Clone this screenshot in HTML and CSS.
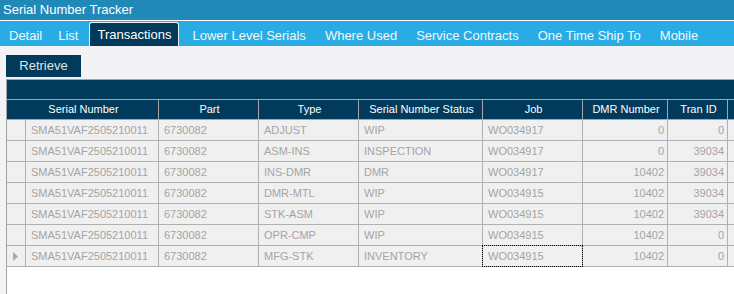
FILE: index.html
```html
<!DOCTYPE html>
<html lang="en">
<head>
    <meta charset="UTF-8">
    <meta name="viewport" content="width=device-width, initial-scale=1.0">
    <title>Serial Number Tracker</title>
    <link rel="stylesheet" href="styles.css">
</head>
<body>
<header class="title-bar">Serial Number Tracker</header>

<nav class="tabs">
    <a class="tab" href="#">Detail</a>
    <a class="tab" href="#">List</a>
    <a class="tab active" href="#">Transactions</a>
    <a class="tab" href="#">Lower Level Serials</a>
    <a class="tab" href="#">Where Used</a>
    <a class="tab" href="#">Service Contracts</a>
    <a class="tab" href="#">One Time Ship To</a>
    <a class="tab" href="#">Mobile</a>
</nav>

<main class="content">
    <button class="btn-retrieve" type="button">Retrieve</button>

    <div class="grid">
        <div class="grid-band"></div>
        <table class="grid-table">
            <colgroup>
                <col class="col-rowhead">
                <col class="col-serial">
                <col class="col-part">
                <col class="col-type">
                <col class="col-status">
                <col class="col-job">
                <col class="col-dmr">
                <col class="col-tran">
                <col class="col-extra">
            </colgroup>
            <thead>
                <tr>
                    <th colspan="2">Serial Number</th>
                    <th>Part</th>
                    <th>Type</th>
                    <th>Serial Number Status</th>
                    <th>Job</th>
                    <th>DMR Number</th>
                    <th>Tran ID</th>
                    <th></th>
                </tr>
            </thead>
            <tbody>
                <tr>
                    <td class="rowhead"></td>
                    <td>SMA51VAF2505210011</td><td>6730082</td><td>ADJUST</td><td>WIP</td>
                    <td>WO034917</td><td class="num">0</td><td class="num">0</td><td></td>
                </tr>
                <tr>
                    <td class="rowhead"></td>
                    <td>SMA51VAF2505210011</td><td>6730082</td><td>ASM-INS</td><td>INSPECTION</td>
                    <td>WO034917</td><td class="num">0</td><td class="num">39034</td><td></td>
                </tr>
                <tr>
                    <td class="rowhead"></td>
                    <td>SMA51VAF2505210011</td><td>6730082</td><td>INS-DMR</td><td>DMR</td>
                    <td>WO034917</td><td class="num">10402</td><td class="num">39034</td><td></td>
                </tr>
                <tr>
                    <td class="rowhead"></td>
                    <td>SMA51VAF2505210011</td><td>6730082</td><td>DMR-MTL</td><td>WIP</td>
                    <td>WO034915</td><td class="num">10402</td><td class="num">39034</td><td></td>
                </tr>
                <tr>
                    <td class="rowhead"></td>
                    <td>SMA51VAF2505210011</td><td>6730082</td><td>STK-ASM</td><td>WIP</td>
                    <td>WO034915</td><td class="num">10402</td><td class="num">39034</td><td></td>
                </tr>
                <tr>
                    <td class="rowhead"></td>
                    <td>SMA51VAF2505210011</td><td>6730082</td><td>OPR-CMP</td><td>WIP</td>
                    <td>WO034915</td><td class="num">10402</td><td class="num">0</td><td></td>
                </tr>
                <tr class="current">
                    <td class="rowhead">
                        <svg class="row-arrow" width="5" height="9" viewBox="0 0 5 9"><path d="M0 0 L5 4.5 L0 9 Z" fill="#a9a9a9"/></svg>
                    </td>
                    <td>SMA51VAF2505210011</td><td>6730082</td><td>MFG-STK</td><td>INVENTORY</td>
                    <td class="focused">WO034915</td><td class="num">10402</td><td class="num">0</td><td></td>
                </tr>
            </tbody>
        </table>
    </div>
</main>
</body>
</html>
```

FILE: styles.css
```css
body {
    font-family: "Liberation Sans", Arial, sans-serif;
    margin: 0;
    padding: 0;
    height: 294px;
    overflow: hidden;
    display: flex;
    flex-direction: column;
    background-color: #f3f3f5;
}

.title-bar {
    background-color: #2189b8;
    color: #fff;
    font-size: 13px;
    height: 20px;
    line-height: 20px;
    padding-left: 3px;
    border-bottom: 1px solid #fff;
}

.tabs {
    background-color: #29abe3;
    height: 25px;
    display: flex;
    align-items: flex-end;
    gap: 3px;
    padding-left: 1px;
}

.tab {
    color: #f2f9fd;
    text-decoration: none;
    font-size: 13px;
    height: 20px;
    line-height: 20px;
    padding: 4px 8px 0;
    white-space: nowrap;
}

.tab:first-child {
    padding-right: 5px;
}

.tab.active {
    background-color: #023a5b;
    color: #fff;
    height: 23px;
    line-height: 23px;
    padding: 0 7px;
    margin-right: 2px;
    border: 1px solid #e6f4fa;
    border-bottom: none;
    border-radius: 3px 3px 0 0;
}

.content {
    flex: 1;
    display: flex;
    flex-direction: column;
    min-height: 0;
}

.btn-retrieve {
    align-self: flex-start;
    margin: 9px 0 2px 6px;
    width: 75px;
    height: 22px;
    padding: 0;
    border: none;
    background-color: #023a5b;
    color: #dfe5ea;
    font-family: inherit;
    font-size: 13px;
    line-height: 22px;
}

.grid {
    flex: 1;
    margin-left: 6px;
    background-color: #fff;
    border-top: 1px solid #a5a5a5;
    border-left: 1px solid #a5a5a5;
    overflow: hidden;
}

.grid-band {
    height: 19px;
    background-color: #023a5b;
}

.grid-table {
    border-collapse: separate;
    border-spacing: 0;
    table-layout: fixed;
    width: 821px;
    border-top: 1px solid #a5a5a5;
    font-size: 11px;
}

.col-rowhead { width: 19px; }
.col-serial { width: 133px; }
.col-part { width: 100px; }
.col-type { width: 100px; }
.col-status { width: 124px; }
.col-job { width: 100px; }
.col-dmr { width: 85px; }
.col-tran { width: 60px; }
.col-extra { width: 100px; }

.grid-table th,
.grid-table td {
    padding: 0 3px 0 5px;
    border-right: 1px solid #b0b0b0;
    border-bottom: 1px solid #b0b0b0;
    white-space: nowrap;
    overflow: hidden;
}

.grid-table th {
    background-color: #023a5b;
    color: #fff;
    font-weight: normal;
    line-height: 19px;
    text-align: center;
    border-color: #a5a5a5;
}

.grid-table td {
    background-color: #f0f0f0;
    color: #a4a4a4;
    line-height: 20px;
    text-align: left;
}

.grid-table td.num {
    text-align: right;
}

.grid-table td.rowhead {
    padding: 0;
    text-align: center;
}

.row-arrow {
    display: block;
    margin: 0 0 0 6px;
}

.grid-table td.focused {
    position: relative;
    overflow: visible;
}

.grid-table td.focused::after {
    content: "";
    position: absolute;
    top: -1px;
    left: -1px;
    right: -1px;
    bottom: -1px;
    border: 1px dotted #000;
}
```
